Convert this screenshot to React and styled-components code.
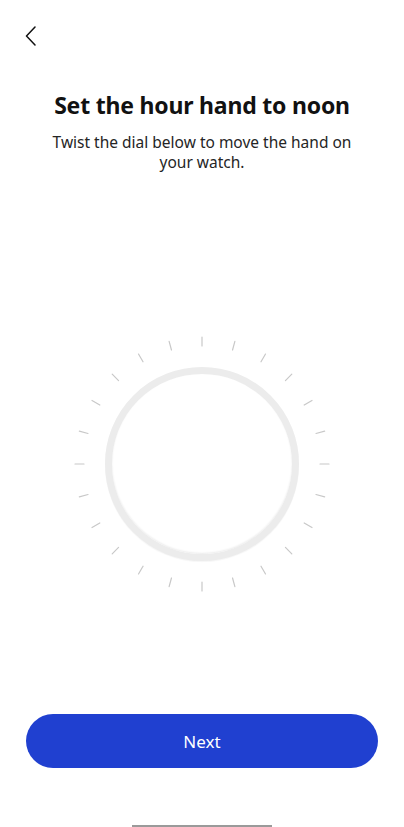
import React from "react";
import styled, { createGlobalStyle } from "styled-components";

const Global = createGlobalStyle`
  html, body { margin: 0; padding: 0; background: #fff; }
  body { font-family: "Noto Sans", "Open Sans", sans-serif; -webkit-font-smoothing: antialiased; }
`;

const Screen = styled.div`
  width: 404px;
  height: 827px;
  display: flex;
  flex-direction: column;
  background: #fff;
  overflow: hidden;
`;

const TopBar = styled.div`
  height: 72px;
  display: flex;
  align-items: center;
  padding-left: 20px;
`;

const BackButton = styled.button`
  border: 0;
  background: none;
  padding: 0;
  width: 22px;
  height: 22px;
  display: flex;
  align-items: center;
  justify-content: center;
  cursor: pointer;
`;

const Header = styled.div`
  display: flex;
  flex-direction: column;
  align-items: center;
  padding: 17px 40px 0;
  text-align: center;
`;

const Title = styled.h1`
  margin: 0;
  font-size: 23px;
  font-weight: 700;
  line-height: 32px;
  color: #111;
  letter-spacing: -0.2px;
`;

const Subtitle = styled.p`
  margin: 11px 0 0;
  font-size: 15.5px;
  line-height: 20px;
  color: #252525;
`;

const DialArea = styled.div`
  flex: 1;
  display: flex;
  align-items: center;
  justify-content: center;
  padding-top: 42px;
`;

const Dial = styled.div`
  position: relative;
  width: 256px;
  height: 256px;
  display: flex;
  align-items: center;
  justify-content: center;
`;

const Ticks = styled.svg`
  position: absolute;
  inset: 0;
`;

const Ring = styled.div`
  width: 180px;
  height: 180px;
  border-radius: 50%;
  border: 7px solid #ececec;
  box-shadow: inset 0 -1px 2px rgba(0, 0, 0, 0.08), 0 1px 1px rgba(0, 0, 0, 0.04);
  background: #fff;
`;

const Footer = styled.div`
  display: flex;
  flex-direction: column;
  align-items: center;
  padding: 0 26px;
`;

const NextButton = styled.button`
  width: 100%;
  height: 54px;
  border-radius: 27px;
  border: 0;
  background: #2040d0;
  color: #fff;
  font-family: "Noto Sans", sans-serif;
  font-size: 17px;
  cursor: pointer;
`;

const HomeIndicator = styled.div`
  width: 140px;
  height: 2px;
  background: #9a9a9a;
  margin-top: 57px;
`;

function TickMarks() {
  const marks = [];
  for (let i = 0; i < 24; i++) {
    const a = (i * 15 * Math.PI) / 180;
    const c = 128;
    const r1 = 118;
    const r2 = 127;
    marks.push(
      <line
        key={i}
        x1={c + r1 * Math.sin(a)}
        y1={c - r1 * Math.cos(a)}
        x2={c + r2 * Math.sin(a)}
        y2={c - r2 * Math.cos(a)}
        stroke="#c8c8c8"
        strokeWidth="1.2"
        strokeLinecap="round"
      />
    );
  }
  return (
    <Ticks width="256" height="256" viewBox="0 0 256 256">
      {marks}
    </Ticks>
  );
}

export default function App() {
  return (
    <>
      <Global />
      <Screen>
        <TopBar>
          <BackButton aria-label="Back">
            <svg width="12" height="20" viewBox="0 0 12 20">
              <path d="M10 1 L1.5 10 L10 19" fill="none" stroke="#111" strokeWidth="1.5" strokeLinecap="round" strokeLinejoin="round" />
            </svg>
          </BackButton>
        </TopBar>
        <Header>
          <Title>Set the hour hand to noon</Title>
          <Subtitle>
            Twist the dial below to move the hand on
            <br />
            your watch.
          </Subtitle>
        </Header>
        <DialArea>
          <Dial>
            <TickMarks />
            <Ring />
          </Dial>
        </DialArea>
        <Footer>
          <NextButton>Next</NextButton>
          <HomeIndicator />
        </Footer>
      </Screen>
    </>
  );
}
